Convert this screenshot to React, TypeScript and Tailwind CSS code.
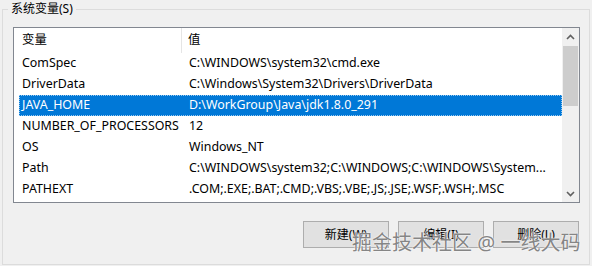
const rows = [
  ["ComSpec", "C:\\WINDOWS\\system32\\cmd.exe"],
  ["DriverData", "C:\\Windows\\System32\\Drivers\\DriverData"],
  ["JAVA_HOME", "D:\\WorkGroup\\Java\\jdk1.8.0_291"],
  ["NUMBER_OF_PROCESSORS", "12"],
  ["OS", "Windows_NT"],
  ["Path", "C:\\WINDOWS\\system32;C:\\WINDOWS;C:\\WINDOWS\\System..."],
  ["PATHEXT", ".COM;.EXE;.BAT;.CMD;.VBS;.VBE;.JS;.JSE;.WSF;.WSH;.MSC"],
];

const Chevron = ({ down }: { down?: boolean }) => (
  <svg width="9" height="6" viewBox="0 0 9 6" className={down ? "rotate-180" : ""}>
    <path d="M1 5 L4.5 1.5 L8 5" fill="none" stroke="#606060" strokeWidth="1.6" />
  </svg>
);

const App = () => {
  return (
    <div
      className="relative w-[592px] h-[266px] overflow-hidden bg-[#f0f0f0] text-[12px] text-black"
      style={{ fontFamily: '"Noto Sans", "Noto Sans CJK SC", sans-serif' }}
    >
      {/* 系统变量 group */}
      <div className="relative ml-[2px] mt-[9px] w-[588px] h-[256px] border border-[#dcdcdc] pl-[10px] pt-[17px]">
        <span className="absolute left-[5px] top-[-9px] bg-[#f0f0f0] px-[3px] leading-[16px]">
          系统变量(S)
        </span>

        {/* list */}
        <div className="flex w-[567px] h-[176px] border border-[#828790] bg-white text-[12.4px]">
          <div className="flex-1 flex flex-col overflow-hidden">
            <div className="flex h-[25px] shrink-0 items-center">
              <div className="w-[168px] h-full pl-[8px] flex items-center border-r border-[#e5e5e5]">变量</div>
              <div className="pl-[6px]">值</div>
            </div>
            {rows.map(([name, value], i) => {
              const sel = i === 2;
              return (
                <div
                  key={name}
                  className={
                    sel
                      ? "ml-[5px] flex h-[21px] shrink-0 items-center bg-[#0078d7] text-white outline-1 outline-dotted outline-offset-[-1px] outline-[#99c9ef]"
                      : "ml-[5px] flex h-[21px] shrink-0 items-center"
                  }
                >
                  <div className="w-[163px] shrink-0 pl-[3px] whitespace-nowrap">{name}</div>
                  <div className="pl-[7px] whitespace-nowrap">{value}</div>
                </div>
              );
            })}
          </div>

          {/* scrollbar */}
          <div className="w-[17px] shrink-0 flex flex-col bg-[#f0f0f0]">
            <div className="h-[17px] flex items-center justify-center">
              <Chevron />
            </div>
            <div className="mx-[1px] mt-[1px] h-[60px] bg-[#cdcdcd]" />
            <div className="flex-1" />
            <div className="h-[17px] flex items-center justify-center">
              <Chevron down />
            </div>
          </div>
        </div>

        {/* buttons */}
        <div className="mt-[18px] flex w-[567px] justify-end gap-[9px] pr-[1px]">
          {["新建(W)", "编辑(I)", "删除(L)"].map((b) => (
            <button
              key={b}
              className="w-[86px] h-[27px] border border-[#adadad] bg-[#e1e1e1] text-[12px]"
            >
              {b}
            </button>
          ))}
        </div>
      </div>

      {/* watermark */}
      <div
        className="absolute left-[352px] top-[229px] text-[20px] leading-[28px] text-[#858585] whitespace-nowrap"
        style={{ textShadow: "0 0 2px #ffffff, 0 0 1px #ffffff" }}
      >
        掘金技术社区 @ 一线大码
      </div>
    </div>
  );
};

export default App;
